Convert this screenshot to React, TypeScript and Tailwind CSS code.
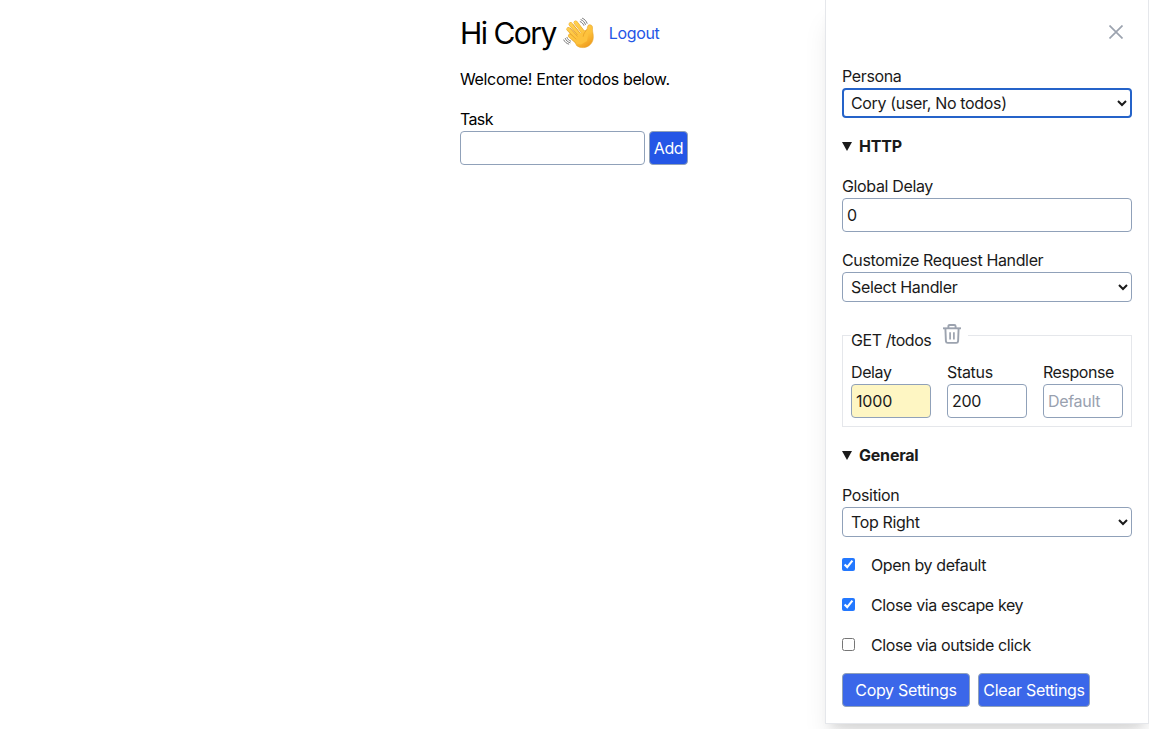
import React from "react";

const field =
  "block rounded border border-slate-400 bg-white h-[34px] px-1 text-base tracking-[-0.02em] placeholder:text-gray-400 placeholder:opacity-100";

function WavingHand() {
  return (
    <svg className="h-8 w-8 shrink-0" viewBox="0 0 32 32" fill="none">
      <defs>
        <linearGradient id="skin" x1="6" y1="5" x2="24" y2="31" gradientUnits="userSpaceOnUse">
          <stop stopColor="#ffd354" />
          <stop offset="0.65" stopColor="#fdc13b" />
          <stop offset="1" stopColor="#ee9a1c" />
        </linearGradient>
      </defs>
      <g stroke="#e8a52c" strokeLinecap="round" strokeWidth="4">
        <path d="M12.6 5.600 20 15" />
        <path d="M7.600 7.200 16 17.500" />
        <path d="M5.400 12.200 14 21" />
        <path d="M7 18.800 14 25" />
      </g>
      <path
        d="M10 20 22 13.500c.9.2 2-.6 2.200-2l.5-2.200c.5-2.200 4.300-1.900 4.700.5.3 2-.1 3.300.3 5.200.9 4.200 1.200 8.900-2.300 12.400-4.100 4.100-10.200 4.100-13.900 1Z"
        fill="url(#skin)"
        stroke="#e8a52c"
        strokeWidth="0.600"
      />
      <g stroke="url(#skin)" strokeLinecap="round" strokeWidth="3.200">
        <path d="M12.600 5.600 21 16.500" />
        <path d="M7.600 7.200 18 19" />
        <path d="M5.400 12.200 16 22.500" />
        <path d="M7 18.800 16 26" />
      </g>
      <path d="M13 21 21 15l4 3-1 6-6 3.500-5-1Z" fill="#fdc23d" />
      <path d="M10.200 7.500 16.500 15.500M7.200 11.200l7 8M6.500 16.200l6.500 5.800" stroke="#df9420" strokeWidth="0.600" strokeLinecap="round" />
      <path d="M23.600 12.800c-.8 2-3.200 3-3.400 6.500" stroke="#e39a22" strokeWidth="0.700" strokeLinecap="round" />
      <g stroke="#6b6b6b" strokeWidth="0.900" strokeLinecap="round">
        <path d="M17.200 4.600c1.600.6 2.900 1.900 3.600 3.700" />
        <path d="M18 2.700c2.100.8 3.700 2.500 4.400 4.800" />
        <path d="M19.500 1.300c2.200.9 3.800 2.700 4.600 5" />
        <path d="M4 20.500c.5 1.700 1.800 3 3.600 3.600" />
        <path d="M2.300 21.500c.8 2.100 2.500 3.600 4.700 4.200" />
        <path d="M.8 23c1 2 2.700 3.500 4.900 4.100" />
      </g>
    </svg>
  );
}

function Trash() {
  return (
    <svg className="h-5 w-[18px]" viewBox="0 0 18 20" fill="none" stroke="#9ca3af" strokeWidth="1.900">
      <path d="M0 4.300h18" />
      <path d="M5.400 4.300V2.200c0-.8.500-1.200 1.300-1.200h4.600c.8 0 1.300.4 1.300 1.200v2.100" />
      <path d="m2.400 4.600.5 12.600c.1 1.100.8 1.700 1.800 1.700h8.600c1 0 1.700-.6 1.800-1.700l.5-12.600" />
      <path d="M7.100 8.200v7.200M10.900 8.200v7.200" strokeWidth="1.700" />
    </svg>
  );
}

function Section({ title }: { title: string }) {
  return (
    <div className="flex h-6 items-center font-bold">
      <svg className="mt-[1px] mr-[7px] h-[9px] w-[10px]" viewBox="0 0 10 9">
        <path d="M0 0h10L5 9Z" fill="currentColor" />
      </svg>
      <span className="tracking-[-0.013em]">{title}</span>
    </div>
  );
}

function SelectField({ label, value, focused }: { label: string; value: string; focused?: boolean }) {
  return (
    <label className="block">
      <span className="block h-6 tracking-[-0.022em] whitespace-nowrap">{label}</span>
      <select
        className={`block h-[30px] w-full rounded bg-white tracking-[-0.021em] ${focused ? "border-2 border-[#2563c9] px-[3px]" : "border border-slate-400 px-1"}`}
      >
        <option>{value}</option>
      </select>
    </label>
  );
}

function Check({ label, checked }: { label: string; checked?: boolean }) {
  return (
    <label className="flex h-6 items-center">
      <input type="checkbox" defaultChecked={checked} className="mr-4 mb-[2px] h-[13px] w-[13px] accent-[#2378ff]" />
      <span className="tracking-[-0.024em]">{label}</span>
    </label>
  );
}

export default function App() {
  return (
    <div className="flex h-[729px] w-[1149px] justify-end overflow-hidden bg-white font-['Inter','Liberation_Sans',sans-serif] text-base text-black">
      <main className="w-[365px] shrink-0 pt-[15px]">
        <div className="flex h-9 items-center">
          <h1 className="mr-[7px] text-[30px] leading-9 tracking-[-0.051em]">Hi Cory</h1>
          <WavingHand />
          <a className="ml-[14px] tracking-[-0.022em] text-[#2456e6]">Logout</a>
        </div>
        <p className="mt-4 h-6 leading-6 tracking-[-0.022em]">Welcome! Enter todos below.</p>
        <div className="mt-4 flex items-end gap-1">
          <label>
            <span className="block h-6 tracking-[-0.04em]">Task</span>
            <input className={`${field} w-[185px]`} />
          </label>
          <button className="h-[34px] w-[39px] rounded border border-slate-400 bg-[#2456e6] tracking-[-0.022em] text-white">Add</button>
        </div>
      </main>

      <aside className="flex h-[724px] w-[324px] shrink-0 flex-col gap-4 border-x border-b border-gray-200 bg-white px-4 pb-4 text-[#1a1a1a] shadow-xl">
        <div className="-mb-4 flex h-16 shrink-0 items-center justify-end pr-[9px]">
          <svg className="h-[14px] w-[14px]" viewBox="0 0 14 14" stroke="#9ca3af" strokeWidth="1.700">
            <path d="M.5.500l13 13M13.500.500l-13 13" />
          </svg>
        </div>
        <SelectField label="Persona" value="Cory (user, No todos)" focused />
        <Section title="HTTP" />
        <label>
          <span className="block h-6 tracking-[-0.022em]">Global Delay</span>
          <input className={`${field} w-full`} defaultValue="0" />
        </label>
        <SelectField label="Customize Request Handler" value="Select Handler" />
        <fieldset className="border border-gray-200 p-2">
          <legend className="h-[34px] w-[117px]">
            <span className="flex h-[34px] items-start">
              <span className="mt-[10px] w-[92px] shrink-0 tracking-[-0.027em]">GET /todos</span>
              <span className="mt-[6px]"><Trash /></span>
            </span>
          </legend>
          <div className="flex gap-4">
            <label>
              <span className="block h-6 tracking-[-0.025em]">Delay</span>
              <input className="block h-[34px] w-20 rounded border border-slate-400 bg-[#fef6c3] px-1 tracking-[-0.01em]" defaultValue="1000" />
            </label>
            <label>
              <span className="block h-6 tracking-[-0.02em]">Status</span>
              <input className={`${field} w-20`} defaultValue="200" />
            </label>
            <label>
              <span className="block h-6 tracking-[-0.028em]">Response</span>
              <input className={`${field} w-20`} placeholder="Default" />
            </label>
          </div>
        </fieldset>
        <Section title="General" />
        <SelectField label="Position" value="Top Right" />
        <Check label="Open by default" checked />
        <Check label="Close via escape key" checked />
        <Check label="Close via outside click" />
        <div className="flex gap-2">
          <button className="h-[34px] w-32 rounded border border-slate-400 bg-[#3b67e9] tracking-[-0.02em] text-white">Copy Settings</button>
          <button className="h-[34px] w-28 rounded border border-slate-400 bg-[#3b67e9] tracking-[-0.02em] whitespace-nowrap text-white">Clear Settings</button>
        </div>
      </aside>
    </div>
  );
}
